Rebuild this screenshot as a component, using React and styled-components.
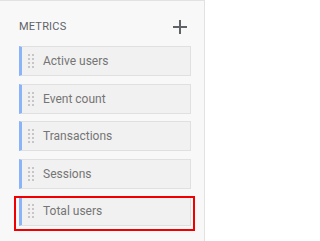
import React from "react"
import styled, { createGlobalStyle } from "styled-components"

const GlobalStyle = createGlobalStyle`
  html, body {
    margin: 0;
    padding: 0;
    background: #ffffff;
  }
  body {
    font-family: Roboto, "Liberation Sans", Arial, sans-serif;
  }
`

const Panel = styled.aside`
  box-sizing: border-box;
  width: 205px;
  height: 241px;
  background: #f8f8f8;
  border-top: 1px solid #e2e2e2;
  border-right: 1px solid #e2e2e2;
  padding: 15px 0 0 19px;
`

const Header = styled.div`
  display: flex;
  align-items: center;
  justify-content: space-between;
  height: 21px;
  padding-right: 17px;
`

const Title = styled.span`
  font-size: 11px;
  letter-spacing: 0.2px;
  color: #5f6368;
`

const AddButton = styled.button`
  display: flex;
  align-items: center;
  justify-content: center;
  width: 14px;
  height: 14px;
  padding: 0;
  border: 0;
  background: none;
  color: #5f6368;
  cursor: pointer;
`

const List = styled.ul`
  list-style: none;
  margin: 9px 0 0;
  padding: 0;
  display: flex;
  flex-direction: column;
  gap: 7.5px;
  width: 172px;
`

const Item = styled.li`
  position: relative;
  box-sizing: border-box;
  height: 30px;
  display: flex;
  align-items: center;
  gap: 9px;
  padding-left: 6px;
  background: #f1f1f1;
  border: 1px solid #e0e0e0;
  border-left: 3px solid #8ab4f8;
`

const Handle = styled.span`
  display: grid;
  grid-template-columns: repeat(2, 2px);
  grid-auto-rows: 2px;
  gap: 2px;
  span {
    background: #c6c6c6;
  }
`

const Label = styled.span`
  font-size: 12px;
  color: #757575;
`

const Highlight = styled.span`
  position: absolute;
  top: -1px;
  left: -8px;
  width: 181px;
  height: 35px;
  box-sizing: border-box;
  border: 2px solid #f00000;
  pointer-events: none;
`

const metrics = ["Active users", "Event count", "Transactions", "Sessions", "Total users"]

const PlusIcon = () => (
  <svg width="14" height="14" viewBox="0 0 14 14">
    <path d="M0 7h14M7 0v14" stroke="currentColor" strokeWidth="2" />
  </svg>
)

const App = () => (
  <>
    <GlobalStyle />
    <Panel>
      <Header>
        <Title>METRICS</Title>
        <AddButton aria-label="Add metric">
          <PlusIcon />
        </AddButton>
      </Header>
      <List>
        {metrics.map((name, i) => (
          <Item key={name}>
            <Handle>
              {Array.from({ length: 8 }).map((_, d) => (
                <span key={d} />
              ))}
            </Handle>
            <Label>{name}</Label>
            {i === metrics.length - 1 && <Highlight />}
          </Item>
        ))}
      </List>
    </Panel>
  </>
)

export default App
